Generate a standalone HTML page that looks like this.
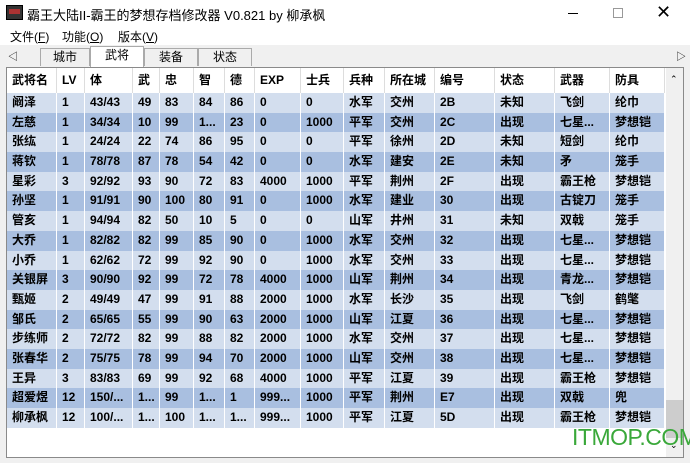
<!DOCTYPE html><html><head><meta charset="utf-8"><style>
*{margin:0;padding:0;box-sizing:border-box}
body{width:690px;height:463px;background:#f0f0f0;font-family:"Liberation Sans","Noto Sans CJK SC",sans-serif;position:relative;overflow:hidden;font-size:12px;color:#000}
.title{position:absolute;left:0;top:0;width:690px;height:28px;background:#fff}
.title .t{position:absolute;left:27px;top:5px;font-size:13px}
.icon{position:absolute;left:6px;top:5px;width:17px;height:15px;background:#333;border:1px solid #000}
.icon:after{content:"";position:absolute;left:2px;top:3px;width:11px;height:5px;background:#a33}
.menu{position:absolute;left:0;top:28px;width:690px;height:17px;background:#fff}
.menu span{position:absolute;top:0;font-size:12px}
.tabs{position:absolute;left:0;top:45px;width:690px;height:20px}
.tab{position:absolute;top:3px;height:18px;border:1px solid #aaa;border-bottom:none;background:#f0f0f0;text-align:center;font-size:12px;line-height:17px}
.tab.a{top:1px;height:21px;background:#fff}
.grid{position:absolute;left:6px;top:67px;width:678px;height:391px;background:#fff;border:1px solid #8a8a8a}
.rows{position:absolute;left:0;top:0}
.r{display:flex;height:19.7px;overflow:hidden}
.r div{flex:none;padding-left:5px;font-weight:bold;font-size:12px;white-space:nowrap;overflow:hidden;border-right:1px solid #fff;line-height:19.7px;height:19.7px}
.r.h{height:25px}
.r.h div{height:25px;line-height:25px;background:#fff;border-right:1px solid #ddd}
.r.l div{background:#d3deee}
.r.d div{background:#a9bfe0}
.r div:nth-child(1){width:50px}.r div:nth-child(2){width:28px}.r div:nth-child(3){width:48px}.r div:nth-child(4){width:27px}.r div:nth-child(5){width:34px}.r div:nth-child(6){width:31px}.r div:nth-child(7){width:30px}.r div:nth-child(8){width:46px}.r div:nth-child(9){width:43px}.r div:nth-child(10){width:41px}.r div:nth-child(11){width:50px}.r div:nth-child(12){width:60px}.r div:nth-child(13){width:60px}.r div:nth-child(14){width:55px}.r div:nth-child(15){width:55px}
.sb{position:absolute;right:0;top:0;width:17px;height:389px;background:#f0f0f0}
</style></head><body>
<div class="title"><div class="icon"></div><div class="t">霸王大陆II-霸王的梦想存档修改器 V0.821 by 柳承枫</div>
<div style="position:absolute;left:568px;top:13px;width:10px;height:1px;background:#000"></div>
<div style="position:absolute;left:613px;top:8px;width:10px;height:10px;border:1px solid #999"></div>
<div style="position:absolute;left:656px;top:2px;font-size:18px;line-height:20px">✕</div></div>
<div class="menu"><span style="left:10px">文件(<u>F</u>)</span><span style="left:62px">功能(<u>O</u>)</span><span style="left:118px">版本(<u>V</u>)</span></div>
<div class="tabs">
<div style="position:absolute;left:8px;top:3px;font-size:10px">◁</div>
<div style="position:absolute;left:676px;top:3px;font-size:10px">▷</div>
<div class="tab" style="left:40px;width:50px">城市</div>
<div class="tab a" style="left:90px;width:54px">武将</div>
<div class="tab" style="left:144px;width:54px">装备</div>
<div class="tab" style="left:198px;width:54px">状态</div>
</div>
<div class="grid">
<div class="rows">
<div class="r h"><div>武将名</div><div>LV</div><div>体</div><div>武</div><div>忠</div><div>智</div><div>德</div><div>EXP</div><div>士兵</div><div>兵种</div><div>所在城</div><div>编号</div><div>状态</div><div>武器</div><div>防具</div></div>
<div class="r l"><div>阚泽</div><div>1</div><div>43/43</div><div>49</div><div>83</div><div>84</div><div>86</div><div>0</div><div>0</div><div>水军</div><div>交州</div><div>2B</div><div>未知</div><div>飞剑</div><div>纶巾</div></div>
<div class="r d"><div>左慈</div><div>1</div><div>34/34</div><div>10</div><div>99</div><div>1...</div><div>23</div><div>0</div><div>1000</div><div>平军</div><div>交州</div><div>2C</div><div>出现</div><div>七星...</div><div>梦想铠</div></div>
<div class="r l"><div>张纮</div><div>1</div><div>24/24</div><div>22</div><div>74</div><div>86</div><div>95</div><div>0</div><div>0</div><div>平军</div><div>徐州</div><div>2D</div><div>未知</div><div>短剑</div><div>纶巾</div></div>
<div class="r d"><div>蒋钦</div><div>1</div><div>78/78</div><div>87</div><div>78</div><div>54</div><div>42</div><div>0</div><div>0</div><div>水军</div><div>建安</div><div>2E</div><div>未知</div><div>矛</div><div>笼手</div></div>
<div class="r l"><div>星彩</div><div>3</div><div>92/92</div><div>93</div><div>90</div><div>72</div><div>83</div><div>4000</div><div>1000</div><div>平军</div><div>荆州</div><div>2F</div><div>出现</div><div>霸王枪</div><div>梦想铠</div></div>
<div class="r d"><div>孙坚</div><div>1</div><div>91/91</div><div>90</div><div>100</div><div>80</div><div>91</div><div>0</div><div>1000</div><div>水军</div><div>建业</div><div>30</div><div>出现</div><div>古锭刀</div><div>笼手</div></div>
<div class="r l"><div>管亥</div><div>1</div><div>94/94</div><div>82</div><div>50</div><div>10</div><div>5</div><div>0</div><div>0</div><div>山军</div><div>井州</div><div>31</div><div>未知</div><div>双戟</div><div>笼手</div></div>
<div class="r d"><div>大乔</div><div>1</div><div>82/82</div><div>82</div><div>99</div><div>85</div><div>90</div><div>0</div><div>1000</div><div>水军</div><div>交州</div><div>32</div><div>出现</div><div>七星...</div><div>梦想铠</div></div>
<div class="r l"><div>小乔</div><div>1</div><div>62/62</div><div>72</div><div>99</div><div>92</div><div>90</div><div>0</div><div>1000</div><div>水军</div><div>交州</div><div>33</div><div>出现</div><div>七星...</div><div>梦想铠</div></div>
<div class="r d"><div>关银屏</div><div>3</div><div>90/90</div><div>92</div><div>99</div><div>72</div><div>78</div><div>4000</div><div>1000</div><div>山军</div><div>荆州</div><div>34</div><div>出现</div><div>青龙...</div><div>梦想铠</div></div>
<div class="r l"><div>甄姬</div><div>2</div><div>49/49</div><div>47</div><div>99</div><div>91</div><div>88</div><div>2000</div><div>1000</div><div>水军</div><div>长沙</div><div>35</div><div>出现</div><div>飞剑</div><div>鹤氅</div></div>
<div class="r d"><div>邹氏</div><div>2</div><div>65/65</div><div>55</div><div>99</div><div>90</div><div>63</div><div>2000</div><div>1000</div><div>山军</div><div>江夏</div><div>36</div><div>出现</div><div>七星...</div><div>梦想铠</div></div>
<div class="r l"><div>步练师</div><div>2</div><div>72/72</div><div>82</div><div>99</div><div>88</div><div>82</div><div>2000</div><div>1000</div><div>水军</div><div>交州</div><div>37</div><div>出现</div><div>七星...</div><div>梦想铠</div></div>
<div class="r d"><div>张春华</div><div>2</div><div>75/75</div><div>78</div><div>99</div><div>94</div><div>70</div><div>2000</div><div>1000</div><div>山军</div><div>交州</div><div>38</div><div>出现</div><div>七星...</div><div>梦想铠</div></div>
<div class="r l"><div>王异</div><div>3</div><div>83/83</div><div>69</div><div>99</div><div>92</div><div>68</div><div>4000</div><div>1000</div><div>平军</div><div>江夏</div><div>39</div><div>出现</div><div>霸王枪</div><div>梦想铠</div></div>
<div class="r d"><div>超爱煜</div><div>12</div><div>150/...</div><div>1...</div><div>99</div><div>1...</div><div>1</div><div>999...</div><div>1000</div><div>平军</div><div>荆州</div><div>E7</div><div>出现</div><div>双戟</div><div>兜</div></div>
<div class="r l"><div>柳承枫</div><div>12</div><div>100/...</div><div>1...</div><div>100</div><div>1...</div><div>1...</div><div>999...</div><div>1000</div><div>平军</div><div>江夏</div><div>5D</div><div>出现</div><div>霸王枪</div><div>梦想铠</div></div>
</div>
<div class="sb"><div style="position:absolute;left:4px;top:6px;font-size:9px">⌃</div><div style="position:absolute;left:0;top:332px;width:17px;height:38px;background:#cdcdcd"></div><div style="position:absolute;left:4px;top:372px;font-size:9px">⌄</div></div>
</div>
<div style="position:absolute;left:572px;top:424px;font-size:23px;color:#3aa83a;font-family:'Liberation Sans',sans-serif;letter-spacing:-0.5px">ITMOP.COM</div>
</body></html>
